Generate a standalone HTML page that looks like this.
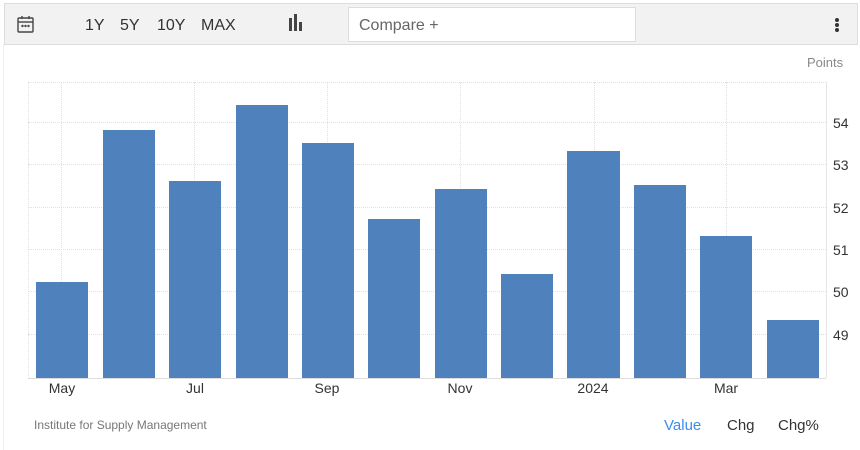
<!DOCTYPE html><html><head><style>
body{margin:0;width:860px;height:450px;background:#fff;font-family:"Liberation Sans",sans-serif;position:relative;overflow:hidden}
.a{position:absolute;white-space:nowrap}
.bar{position:absolute;background:#4f81bd;width:52px;bottom:72px}
.xl{position:absolute;top:380px;font-size:14px;color:#333;transform:translateX(-50%)}
.yl{position:absolute;left:833px;font-size:14px;color:#333}
.hg{position:absolute;left:28px;width:798px;border-top:1px dotted #e0e0e0;height:0}
.vg{position:absolute;top:82px;height:296px;border-left:1px dotted #e0e0e0;width:0}
</style></head><body>
<div class="a" style="left:3px;top:44px;width:1px;height:406px;background:#eee"></div>
<div class="a" style="left:4px;top:3px;width:852px;height:40px;background:#f2f2f2;border:1px solid #ddd"></div>
<svg class="a" style="left:16px;top:15px" width="20" height="20" viewBox="0 0 20 20" fill="none" stroke="#444" stroke-width="1.4"><rect x="2" y="3" width="15" height="14" rx="1"/><line x1="2" y1="7" x2="17" y2="7"/><line x1="6" y1="1" x2="6" y2="4"/><line x1="13" y1="1" x2="13" y2="4"/><circle cx="6.5" cy="11" r=".5" fill="#444"/><circle cx="9.5" cy="11" r=".5" fill="#444"/><circle cx="12.5" cy="11" r=".5" fill="#444"/></svg>
<div class="a" style="left:85px;top:17px;font-size:16px;color:#333">1Y</div>
<div class="a" style="left:120px;top:17px;font-size:16px;color:#333">5Y</div>
<div class="a" style="left:157px;top:17px;font-size:16px;color:#333">10Y</div>
<div class="a" style="left:201px;top:17px;font-size:16px;color:#333">MAX</div>
<div class="a" style="left:289px;top:18px;width:3px;height:13px;background:#444"></div>
<div class="a" style="left:294px;top:14px;width:3px;height:17px;background:#444"></div>
<div class="a" style="left:299px;top:22px;width:3px;height:9px;background:#444"></div>
<div class="a" style="left:348px;top:7px;width:286px;height:33px;background:#fff;border:1px solid #ddd"></div>
<div class="a" style="left:359px;top:17px;font-size:16px;color:#666">Compare +</div>
<div class="a" style="left:835px;top:18px;width:4px;height:4px;border-radius:2px;background:#333;box-shadow:0 5px 0 #333,0 10px 0 #333"></div>
<div class="a" style="left:807px;top:55px;font-size:13px;color:#888">Points</div>
<div class="hg" style="top:82px"></div><div class="hg" style="top:122px"></div><div class="hg" style="top:164px"></div><div class="hg" style="top:207px"></div><div class="hg" style="top:249px"></div><div class="hg" style="top:291px"></div><div class="hg" style="top:334px"></div>
<div class="vg" style="left:28px"></div><div class="vg" style="left:61px"></div><div class="vg" style="left:194px"></div><div class="vg" style="left:327px"></div><div class="vg" style="left:460px"></div><div class="vg" style="left:594px"></div><div class="vg" style="left:726px"></div>
<div class="a" style="left:826px;top:82px;width:1px;height:296px;background:#e6e6e6"></div>
<div class="a" style="left:28px;top:378px;width:798px;height:1px;background:#ddd"></div>
<div class="bar" style="left:36px;top:282px"></div>
<div class="bar" style="left:103px;top:130px"></div>
<div class="bar" style="left:169px;top:181px"></div>
<div class="bar" style="left:236px;top:105px"></div>
<div class="bar" style="left:302px;top:143px"></div>
<div class="bar" style="left:368px;top:219px"></div>
<div class="bar" style="left:435px;top:189px"></div>
<div class="bar" style="left:501px;top:274px"></div>
<div class="bar" style="left:567px;top:151px;width:53px"></div>
<div class="bar" style="left:634px;top:185px"></div>
<div class="bar" style="left:700px;top:236px"></div>
<div class="bar" style="left:767px;top:320px"></div>
<div class="yl" style="top:115px">54</div><div class="yl" style="top:157px">53</div><div class="yl" style="top:200px">52</div><div class="yl" style="top:242px">51</div><div class="yl" style="top:284px">50</div><div class="yl" style="top:327px">49</div>
<div class="xl" style="left:62px">May</div><div class="xl" style="left:195px">Jul</div><div class="xl" style="left:327px">Sep</div><div class="xl" style="left:460px">Nov</div><div class="xl" style="left:593px">2024</div><div class="xl" style="left:726px">Mar</div>
<div class="a" style="left:34px;top:418px;font-size:12px;color:#777">Institute for Supply Management</div>
<div class="a" style="left:664px;top:417px;font-size:15px;color:#3c8de8">Value</div>
<div class="a" style="left:727px;top:417px;font-size:15px;color:#333">Chg</div>
<div class="a" style="left:778px;top:417px;font-size:15px;color:#333">Chg%</div>
</body></html>
